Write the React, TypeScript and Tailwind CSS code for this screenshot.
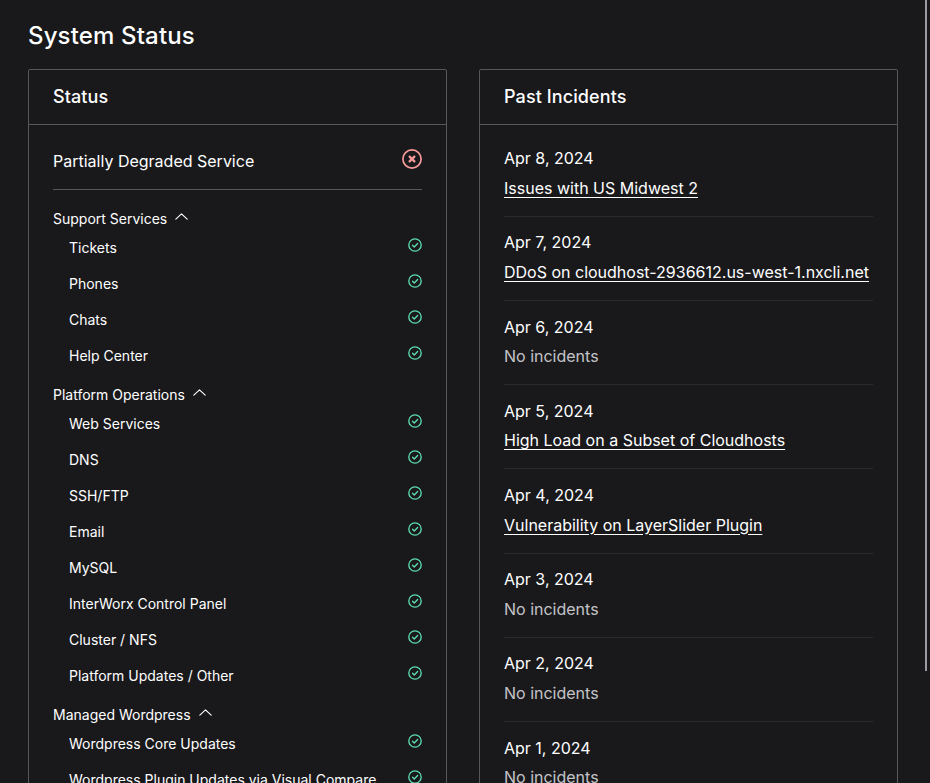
import React from "react";

const groups = [
  { name: "Support Services", items: ["Tickets", "Phones", "Chats", "Help Center"] },
  {
    name: "Platform Operations",
    items: ["Web Services", "DNS", "SSH/FTP", "Email", "MySQL", "InterWorx Control Panel", "Cluster / NFS", "Platform Updates / Other"],
  },
  { name: "Managed Wordpress", items: ["Wordpress Core Updates", "Wordpress Plugin Updates via Visual Compare"] },
];

const incidents: [string, string | null][] = [
  ["Apr 8, 2024", "Issues with US Midwest 2"],
  ["Apr 7, 2024", "DDoS on cloudhost-2936612.us-west-1.nxcli.net"],
  ["Apr 6, 2024", null],
  ["Apr 5, 2024", "High Load on a Subset of Cloudhosts"],
  ["Apr 4, 2024", "Vulnerability on LayerSlider Plugin"],
  ["Apr 3, 2024", null],
  ["Apr 2, 2024", null],
  ["Apr 1, 2024", null],
];

function Check() {
  return (
    <svg viewBox="0 0 24 24" fill="none" stroke="#5eddaf" strokeWidth="2.3" strokeLinecap="round" strokeLinejoin="round" className="h-[14px] w-[14px] shrink-0 mt-[-6px]">
      <circle cx="12" cy="12" r="10.6" />
      <path d="M7.8 12.5l2.9 2.9L16.5 9.3" />
    </svg>
  );
}

function Cross() {
  return (
    <svg viewBox="0 0 20 20" fill="none" stroke="#f99a9a" strokeLinecap="round" className="h-5 w-5 shrink-0 mt-[-4px]">
      <circle cx="10" cy="10" r="9.1" strokeWidth="1.7" />
      <path d="M7.6 7.6l4.8 4.8M12.4 7.6l-4.8 4.8" strokeWidth="2.2" />
    </svg>
  );
}

function Chevron() {
  return (
    <svg viewBox="0 0 24 24" fill="none" stroke="#ffffff" strokeWidth="1.6" strokeLinecap="round" strokeLinejoin="round" className="h-[17px] w-[17px] mt-[-5px]">
      <path d="M4 15.75l8-7.5 8 7.5" />
    </svg>
  );
}

export default function App() {
  return (
    <div className="relative h-[783px] overflow-hidden bg-[#19191c] pl-[28px] font-['Inter',sans-serif] text-white">
      <h1 className="h-[69px] pt-[20px] text-[24px] leading-[32px] font-medium tracking-[0.15px]">System Status</h1>
      <div className="flex gap-[32px]">
        <section className="w-[419px] rounded-[2px] border border-[#56565b]">
          <h2 className="h-[55px] border-b border-[#56565b] px-[24px] pt-[13px] text-[18px] leading-[28px] font-medium tracking-[0.1px]">Status</h2>
          <div className="px-[24px]">
            <div className="flex h-[65px] items-center justify-between border-b border-[#56565b] pt-[8px]">
              <span className="text-[16px] leading-[24px]">Partially Degraded Service</span>
              <Cross />
            </div>
            <div className="pt-[17px]">
              {groups.map((g) => (
                <div key={g.name} className="mb-[6px]">
                  <div className="mb-[3px] flex h-[23px] items-center gap-[6px] text-[14px] leading-[20px]">
                    {g.name}
                    <Chevron />
                  </div>
                  {g.items.map((item) => (
                    <div key={item} className="flex h-[36px] items-center justify-between pb-[7px] pl-[16px] text-[14px] leading-[20px]">
                      <span>{item}</span>
                      <Check />
                    </div>
                  ))}
                </div>
              ))}
            </div>
          </div>
        </section>
        <section className="w-[419px] rounded-[2px] border border-[#56565b]">
          <h2 className="h-[55px] border-b border-[#56565b] px-[24px] pt-[13px] text-[18px] leading-[28px] font-medium tracking-[0.1px]">Past Incidents</h2>
          <div className="px-[24px] pt-[21.1px]">
            {incidents.map(([date, link]) => (
              <div key={date} className="mb-[13.65px] border-b border-[#2a2a2e] pb-[15.9px] text-[16px] leading-[24px]">
                <div>{date}</div>
                <div className="mt-[5.7px]">
                  {link ? <a href="#" className="underline underline-offset-[3px]">{link}</a> : <span className="text-[#c4c4c8]">No incidents</span>}
                </div>
              </div>
            ))}
          </div>
        </section>
      </div>
      <div className="absolute top-0 right-[3px] h-[671px] w-[2px] bg-[#9b9ca1]" />
    </div>
  );
}
